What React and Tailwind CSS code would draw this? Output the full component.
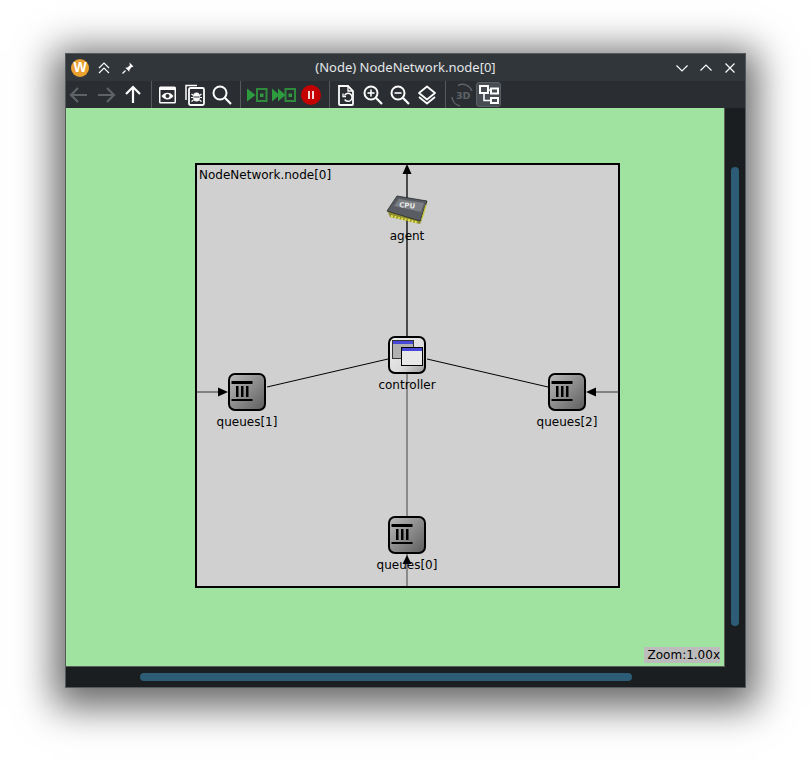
import React from "react";

const white = "#fcfcfc";
const dim = "#5f6367";

function Btn({ children }) {
  return <div className="w-[27px] h-[27px] flex items-center justify-center">{children}</div>;
}

function Sep() {
  return <div className="w-px h-[27px] ml-[5px] mr-[2px] bg-[#565a5e]" />;
}

function Ico({ children, size = 22, vb = 22 }) {
  return (
    <svg width={size} height={size} viewBox={`0 0 ${vb} ${vb}`} fill="none">
      {children}
    </svg>
  );
}

function Arrow({ dir, color }) {
  const d = {
    left: "M19 11H3M10 4l-7 7 7 7",
    right: "M3 11h16M12 4l7 7-7 7",
    up: "M11 19V3M4 10l7-7 7 7",
  }[dir];
  return (
    <Ico>
      <path d={d} stroke={color} strokeWidth="2.2" />
    </Ico>
  );
}

function Magnifier({ sign }) {
  return (
    <Ico>
      <circle cx="9" cy="9" r="6.5" stroke={white} strokeWidth="2" />
      <path d="M13.8 13.8L20 20" stroke={white} strokeWidth="2.2" />
      {sign && <path d="M5.5 9h7" stroke={white} strokeWidth="1.6" />}
      {sign === "+" && <path d="M9 5.5v7" stroke={white} strokeWidth="1.6" />}
    </Ico>
  );
}

function RunIcon({ fast }) {
  return (
    <svg width="24" height="16" viewBox="0 0 24 16" fill="none">
      {fast && <path d="M0 1.500l7.500 6.500-7.500 6.500z" fill="#2e9b3e" />}
      <path d={fast ? "M6 1.500l7.500 6.500-7.500 6.500z" : "M2 1.500l8.500 6.500-8.500 6.500z"} fill="#2e9b3e" />
      <rect x={fast ? 13.500 : 12} y="2" width="9.500" height="12" stroke="#2e8b3c" strokeWidth="2" />
      <rect x={fast ? 16.500 : 15} y="6.500" width="3.500" height="3.500" fill="#2e9b3e" />
    </svg>
  );
}

function Toolbar() {
  return (
    <div className="h-[27px] flex items-center bg-[#2a2e32] -ml-px">
      <Btn><Arrow dir="left" color={dim} /></Btn>
      <Btn><Arrow dir="right" color={dim} /></Btn>
      <Btn><Arrow dir="up" color={white} /></Btn>
      <Sep />
      <Btn>
        <Ico>
          <rect x="2" y="2.500" width="17" height="17" rx="1.500" fill={white} />
          <rect x="3.500" y="6" width="14" height="12" fill="#2a2e32" />
          <path d="M4.500 12c3-4.500 9-4.500 12 0-3 4.500-9 4.500-12 0z" fill={white} />
          <circle cx="10.500" cy="12" r="2" fill="#2a2e32" />
        </Ico>
      </Btn>
      <Btn>
        <Ico>
          <path d="M2 16V1.500h11" stroke={white} strokeWidth="1.500" />
          <rect x="5" y="4" width="15" height="17" rx="1.500" stroke={white} strokeWidth="1.800" />
          <ellipse cx="12.500" cy="13" rx="3.500" ry="4.500" fill={white} />
          <path d="M7.500 10l2 1.500M17.500 10l-2 1.500M7 13.500h2M18 13.500h-2M7.500 17.500l2-1.500M17.500 17.500l-2-1.500" stroke={white} strokeWidth="1.200" />
          <path d="M9.500 13h6" stroke="#2a2e32" strokeWidth="1" />
        </Ico>
      </Btn>
      <Btn><Magnifier /></Btn>
      <Sep />
      <Btn><RunIcon /></Btn>
      <Btn><RunIcon fast /></Btn>
      <Btn>
        <div className="w-5 h-5 rounded-full bg-[#c40000] flex items-center justify-center gap-[2px]">
          <div className="w-[2px] h-2 bg-[#f4d8d8]" />
          <div className="w-[2px] h-2 bg-[#f4d8d8]" />
        </div>
      </Btn>
      <Sep />
      <Btn>
        <Ico>
          <path d="M4 2h9l5 5v13a1 1 0 0 1-1 1H5a1 1 0 0 1-1-1z" stroke={white} strokeWidth="1.800" />
          <path d="M13 2v5h5" stroke={white} strokeWidth="1.300" />
          <path d="M9.500 11.500a4 4 0 1 1 .2 4" stroke={white} strokeWidth="1.500" />
          <path d="M8 9.500v3h3" stroke={white} strokeWidth="1.300" />
        </Ico>
      </Btn>
      <Btn><Magnifier sign="+" /></Btn>
      <Btn><Magnifier sign="-" /></Btn>
      <Btn>
        <Ico>
          <path d="M11 2.500l8 6.500-8 6.500-8-6.500z" stroke={white} strokeWidth="1.800" strokeLinejoin="round" />
          <path d="M3 13l8 6.500 8-6.500" stroke={white} strokeWidth="1.800" strokeLinejoin="round" />
        </Ico>
      </Btn>
      <Sep />
      <Btn>
        <svg width="26" height="26" viewBox="0 0 26 26" fill="none">
          <path d="M9 3.500A10 10 0 0 1 23 9M3 15a10 10 0 0 0 8 9" stroke={dim} strokeWidth="1.500" />
          <text x="7" y="17" fontSize="9.500" fontWeight="700" fill={dim} fontFamily="'DejaVu Sans', sans-serif">3D</text>
        </svg>
      </Btn>
      <Btn>
        <div className="w-[25px] h-[25px] flex items-center justify-center bg-[#474c52] rounded-[3px] border border-[#5a5f64]">
          <svg width="20" height="19" viewBox="0 0 20 19" fill="none">
            <rect x="1" y="1" width="8" height="7" stroke={white} strokeWidth="2" />
            <rect x="12" y="3.500" width="7" height="5" stroke={white} strokeWidth="2" />
            <rect x="12" y="13" width="7" height="5" stroke={white} strokeWidth="2" />
            <path d="M9 5h3M5 8v7.500h7" stroke={white} strokeWidth="1.600" />
          </svg>
        </div>
      </Btn>
    </div>
  );
}

function TitleBar() {
  return (
    <div className="relative h-[27px] flex items-center bg-[#31363b]">
      <div className="w-[18px] h-[18px] ml-[5px] rounded-full bg-[#e9a030] flex items-center justify-center text-white text-[14px] font-bold font-['Liberation_Sans',sans-serif]">
        W
      </div>
      <svg className="ml-[8px]" width="14" height="14" viewBox="0 0 14 14" fill="none">
        <path d="M2 7l5-5 5 5M2 12l5-5 5 5" stroke={white} strokeWidth="1.200" />
      </svg>
      <svg className="ml-[10px]" width="14" height="14" viewBox="0 0 14 14" fill="none">
        <path d="M8.500 1.500l4 4-2 .7-2 2.500-.2 2-4-4 2-.3 2.500-2z" fill={white} />
        <path d="M4.500 9.500L1.500 12.500" stroke={white} strokeWidth="1.300" />
      </svg>
      <div className="absolute inset-x-0 text-center text-[13px] text-[#e4e6e8] font-['Noto_Sans',sans-serif]">
        (Node) NodeNetwork.node[0]
      </div>
      <div className="ml-auto flex items-center gap-[10px] pr-[8px]">
        <svg width="14" height="14" viewBox="0 0 14 14" fill="none">
          <path d="M1.500 4.500L7 10l5.500-5.500" stroke={white} strokeWidth="1.200" />
        </svg>
        <svg width="14" height="14" viewBox="0 0 14 14" fill="none">
          <path d="M1.500 9.500L7 4l5.500 5.500" stroke={white} strokeWidth="1.200" />
        </svg>
        <svg width="14" height="14" viewBox="0 0 14 14" fill="none">
          <path d="M2.500 2.500l9 9M11.500 2.500l-9 9" stroke={white} strokeWidth="1.200" />
        </svg>
      </div>
    </div>
  );
}

// page coordinates are used in the svg viewBox, the canvas starts at 66,108
function QueueIcon({ x, y }) {
  return (
    <g transform={`translate(${x} ${y})`}>
      <rect x="1" y="1" width="36" height="36" rx="6" fill="url(#qgrad)" stroke="#000" strokeWidth="2" />
      <rect x="3.500" y="8" width="21" height="3" fill="#000" />
      <rect x="8" y="13" width="2.500" height="11" fill="#000" />
      <rect x="13" y="13" width="2.500" height="11" fill="#000" />
      <rect x="18" y="13" width="2.500" height="11" fill="#000" />
      <rect x="3.500" y="26" width="21" height="2" fill="#000" />
    </g>
  );
}

function Network() {
  return (
    <svg className="absolute inset-0" width="658" height="558" viewBox="66 108 658 558" fill="none">
      <defs>
        <linearGradient id="qgrad" x1="0" y1="0" x2="1" y2="1">
          <stop offset="0" stopColor="#bcbcbc" />
          <stop offset="1" stopColor="#5c5c5c" />
        </linearGradient>
        <linearGradient id="cgrad" x1="0" y1="0" x2="1" y2="1">
          <stop offset="0" stopColor="#f0f0f0" />
          <stop offset="0.6" stopColor="#dcdcdc" />
          <stop offset="1" stopColor="#9a9a9a" />
        </linearGradient>
      </defs>
      <g stroke="#000" strokeWidth="1">
        <path d="M407 172V336" stroke="#111" strokeWidth="1.400" />
        <path d="M407 374V586" stroke="#444" />
        <path d="M197 392H222" stroke="#333" />
        <path d="M619 392H594" stroke="#333" />
        <path d="M388 359L267 387M427 359L548 387" />
      </g>
      <path d="M407 164l-4.500 10h9z" fill="#000" />
      <path d="M407 555l-4.500 9h9z" fill="#000" />
      <path d="M228 392l-10-4.500v9z" fill="#000" />
      <path d="M586 392l10-4.500v9z" fill="#000" />

      {/* agent chip */}
      <path d="M387 210l3 7 30 7 2-4z" fill="#8f8f30" />
      <path d="M420 224l7-22-1-2-6 20z" fill="#a8a838" />
      <path d="M397 196l30 5-7 20-33-10z" fill="#595d63" stroke="#26282b" strokeWidth="0.800" />
      <path d="M399 199l25 4-3 9-27-6z" fill="#7b7f84" />
      <text x="399" y="207" fontSize="7" fontWeight="700" fill="#e8e8e8" fontFamily="'DejaVu Sans', sans-serif" transform="rotate(6 399 207)">CPU</text>
      <path d="M391 216l27 6.500" stroke="#e6e64a" strokeWidth="2" strokeDasharray="2 1.500" />
      <path d="M422 219l4-14" stroke="#c8c83c" strokeWidth="1.200" />

      {/* controller */}
      <rect x="389" y="337" width="36" height="36" rx="6" fill="url(#cgrad)" stroke="#000" strokeWidth="2" />
      <rect x="392.500" y="340.500" width="21" height="18" fill="#b0b0b0" stroke="#333" />
      <rect x="393" y="341" width="20" height="3" fill="#4848d8" />
      <rect x="401.500" y="347.500" width="21" height="18" fill="#e8e8e8" stroke="#000" />
      <rect x="402" y="348" width="20" height="3" fill="#4848d8" />

      <QueueIcon x={228} y={373} />
      <QueueIcon x={548} y={373} />
      <QueueIcon x={388} y={516} />
    </svg>
  );
}

function Label({ className, children }) {
  return <div className={`absolute -translate-x-1/2 text-[12px] leading-[15px] text-black whitespace-nowrap ${className}`}>{children}</div>;
}

export default function App() {
  return (
    <div className="w-[812px] h-[766px] bg-white pt-[54px] pl-[66px] font-['DejaVu_Sans',sans-serif] overflow-hidden">
      <div className="w-[679px] h-[633px] flex flex-col bg-[#1b1e20] shadow-[0_8px_36px_12px_rgba(0,0,0,0.6)] outline outline-1 outline-[#55595c]">
        <TitleBar />
        <Toolbar />
        <div className="flex-1 flex min-h-0">
          <div className="relative w-[658px] h-[558px] bg-[#a0e2a0] border-r border-b border-[#5a5f5a] box-content -mr-px overflow-hidden">
            <div className="absolute left-[129px] top-[55px] w-[425px] h-[425px] bg-[#d0d0d0] border-2 border-black">
              <div className="pl-[2px] pt-[3px] text-[12px] leading-[15px] text-black">NodeNetwork.node[0]</div>
            </div>
            <Network />
            <Label className="left-[341px] top-[121px]">agent</Label>
            <Label className="left-[341px] top-[270px]">controller</Label>
            <Label className="left-[181px] top-[307px]">queues[1]</Label>
            <Label className="left-[501px] top-[307px]">queues[2]</Label>
            <Label className="left-[341px] top-[450px]">queues[0]</Label>
            <div className="absolute right-[4px] bottom-[3px] h-[16px] pl-[4px] bg-[#bcbcbc] text-[12px] leading-[16px] text-black">
              Zoom:1.00x
            </div>
          </div>
          <div className="flex-1 pt-[59px]">
            <div className="ml-[7px] w-[8px] h-[459px] rounded-full bg-[#2d5c76]" />
          </div>
        </div>
        <div className="h-[20px] pt-[6px] pl-[74px]">
          <div className="w-[492px] h-[8px] rounded-full bg-[#2d5c76]" />
        </div>
      </div>
    </div>
  );
}
